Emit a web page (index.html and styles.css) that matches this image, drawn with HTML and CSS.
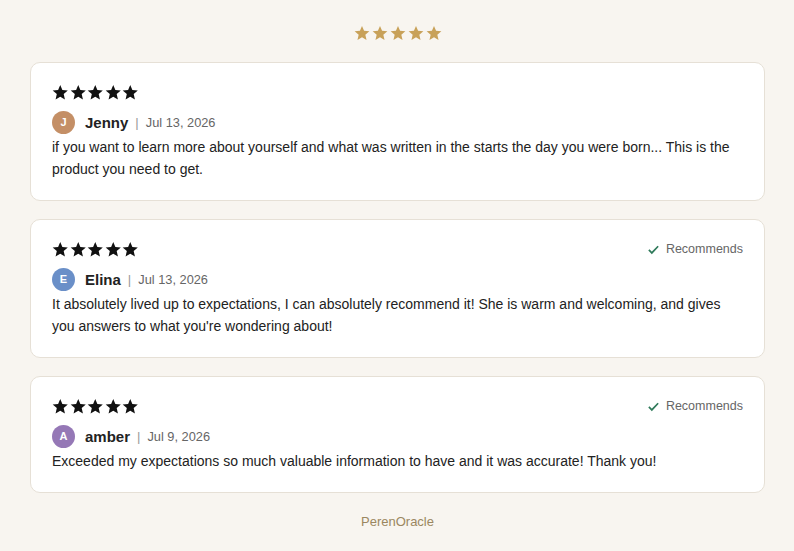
FILE: index.html
```html
<!DOCTYPE html>
<html>
<head>
  <meta charset="UTF-8">
  <title>Reviews</title>
  <link rel="stylesheet" href="styles.css">
</head>
<body>
  <svg width="0" height="0" class="defs">
    <symbol id="star" viewBox="0 0 24 24"><path d="M12 1.5l3.1 7.3 7.9.7-6 5.2 1.8 7.8L12 18.4l-6.8 4.1 1.8-7.8-6-5.2 7.9-.7z"/></symbol>
  </svg>

  <div class="summary">
    <svg><use href="#star"/></svg><svg><use href="#star"/></svg><svg><use href="#star"/></svg><svg><use href="#star"/></svg><svg><use href="#star"/></svg>
  </div>

  <div class="reviews">
    <div class="card">
      <div class="top">
        <div class="stars">
          <svg><use href="#star"/></svg><svg><use href="#star"/></svg><svg><use href="#star"/></svg><svg><use href="#star"/></svg><svg><use href="#star"/></svg>
        </div>
      </div>
      <div class="who">
        <span class="avatar tan">J</span>
        <span class="name">Jenny</span>
        <span class="sep">|</span>
        <span class="date">Jul 13, 2026</span>
      </div>
      <p>if you want to learn more about yourself and what was written in the starts the day you were born... This is the product you need to get.</p>
    </div>

    <div class="card">
      <div class="top">
        <div class="stars">
          <svg><use href="#star"/></svg><svg><use href="#star"/></svg><svg><use href="#star"/></svg><svg><use href="#star"/></svg><svg><use href="#star"/></svg>
        </div>
        <div class="rec">
          <svg viewBox="0 0 14 14"><path d="M2 7.5l3.2 3.2L12 3.5"/></svg>
          Recommends
        </div>
      </div>
      <div class="who">
        <span class="avatar blue">E</span>
        <span class="name">Elina</span>
        <span class="sep">|</span>
        <span class="date">Jul 13, 2026</span>
      </div>
      <p>It absolutely lived up to expectations, I can absolutely recommend it! She is warm and welcoming, and gives you answers to what you're wondering about!</p>
    </div>

    <div class="card">
      <div class="top">
        <div class="stars">
          <svg><use href="#star"/></svg><svg><use href="#star"/></svg><svg><use href="#star"/></svg><svg><use href="#star"/></svg><svg><use href="#star"/></svg>
        </div>
        <div class="rec">
          <svg viewBox="0 0 14 14"><path d="M2 7.5l3.2 3.2L12 3.5"/></svg>
          Recommends
        </div>
      </div>
      <div class="who">
        <span class="avatar purple">A</span>
        <span class="name">amber</span>
        <span class="sep">|</span>
        <span class="date">Jul 9, 2026</span>
      </div>
      <p>Exceeded my expectations so much valuable information to have and it was accurate! Thank you!</p>
    </div>
  </div>

  <div class="shop">PerenOracle</div>
</body>
</html>
```

FILE: styles.css
```css
body {
  margin: 0;
  padding: 25px 29px 0 30px;
  background-color: #f8f5f0;
  font-family: "Liberation Sans", Arial, sans-serif;
  color: #222;
}

.defs {
  position: absolute;
}

.summary {
  display: flex;
  justify-content: center;
  gap: 2px;
  height: 18px;
}

.summary svg {
  width: 16px;
  height: 16px;
  fill: #c8a159;
}

.reviews {
  display: flex;
  flex-direction: column;
  gap: 18px;
  margin-top: 19px;
}

.card {
  background: #fff;
  border: 1px solid #e6e0d6;
  border-radius: 10px;
  padding: 20px 21px 20px 21px;
}

.top {
  display: flex;
  justify-content: space-between;
  align-items: center;
  height: 18px;
}

.stars {
  display: flex;
  gap: 1px;
}

.stars svg {
  width: 16.5px;
  height: 16.5px;
  fill: #111;
}

.rec {
  display: flex;
  align-items: center;
  gap: 6px;
  font-size: 12.5px;
  color: #666;
}

.rec svg {
  width: 13px;
  height: 13px;
  fill: none;
  stroke: #2f7a5a;
  stroke-width: 1.8;
}

.who {
  display: flex;
  align-items: center;
  margin-top: 9px;
  height: 24px;
}

.avatar {
  width: 23px;
  height: 23px;
  border-radius: 50%;
  color: #fff;
  font-size: 11px;
  font-weight: bold;
  display: flex;
  align-items: center;
  justify-content: center;
  margin-right: 10px;
}

.tan { background: #c48f66; }
.blue { background: #6a8fc8; }
.purple { background: #9578b6; }

.name {
  font-size: 15px;
  font-weight: bold;
  color: #222;
}

.sep {
  color: #999;
  font-size: 13px;
  margin: 0 7px;
}

.date {
  font-size: 12.8px;
  color: #666;
}

p {
  margin: 2px 0 0;
  font-size: 14px;
  line-height: 22px;
}

.shop {
  text-align: center;
  font-size: 13px;
  color: #9b8760;
  margin-top: 21px;
}
```
